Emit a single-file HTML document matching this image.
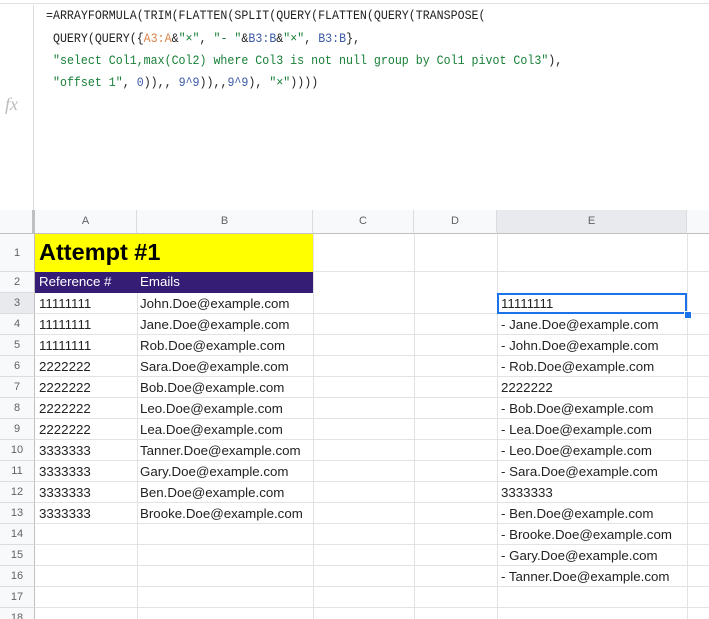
<!DOCTYPE html><html style="overflow:hidden;height:619px"><head><style>
body{margin:0;width:709px;height:619px;overflow:hidden;background:#fff;font-family:"Liberation Sans",Arial,sans-serif;position:relative}
.a{position:absolute}
.f{font-family:"Liberation Mono",monospace;font-size:12.5px;color:#222;white-space:pre;left:46px;transform:scaleX(0.93);transform-origin:0 0}
.g{color:#188038}.o{color:#d9834a}.b{color:#3c5aa8}
.h{position:absolute;top:210px;height:24px;background:#f8f9fa;border-bottom:1px solid #c0c0c0;border-right:1px solid #dadce0;box-sizing:border-box;font-size:11px;color:#5f6368;text-align:center;line-height:23px}
.r{position:absolute;left:0;width:35px;background:#f8f9fa;border-right:1px solid #c0c0c0;border-bottom:1px solid #dadce0;box-sizing:border-box;font-size:11px;color:#5f6368;text-align:center}
.vl{position:absolute;top:234px;height:385px;width:1px;background:#e2e3e3}
.hl{position:absolute;left:35px;right:0;height:1px;background:#e2e3e3}
.t{position:absolute;font-size:13.3px;color:#222;white-space:nowrap}
</style></head><body>
<div class="a" style="left:0;right:0;top:3px;height:1px;background:#e0e0e0"></div>
<div class="a" style="left:33px;top:5px;width:1px;height:205px;background:#dadce0"></div>
<div class="a" style="left:5px;top:94px;font-family:'Liberation Serif',serif;font-style:italic;font-size:18px;color:#bbb">fx</div>
<div class="a f" style="top:9px">=ARRAYFORMULA(TRIM(FLATTEN(SPLIT(QUERY(FLATTEN(QUERY(TRANSPOSE(</div>
<div class="a f" style="top:32px"> QUERY(QUERY({<span class="o">A3:A</span>&amp;<span class="g">"×"</span>, <span class="g">"- "</span>&amp;<span class="b">B3:B</span>&amp;<span class="g">"×"</span>, <span class="b">B3:B</span>},</div>
<div class="a f" style="top:54px"> <span class="g">"select Col1,max(Col2) where Col3 is not null group by Col1 pivot Col3"</span>),</div>
<div class="a f" style="top:76px"> <span class="g">"offset 1"</span>, <span class="b">0</span>)),, <span class="b">9^9</span>)),,<span class="b">9^9</span>), <span class="g">"×"</span>))))</div>
<div class="h" style="left:0;width:35px;border-right:3px solid #c0c0c0"></div>
<div class="h" style="left:35px;width:102px">A</div>
<div class="h" style="left:137px;width:176px">B</div>
<div class="h" style="left:313px;width:101px">C</div>
<div class="h" style="left:414px;width:83px">D</div>
<div class="h" style="left:497px;width:190px;background:#e8eaed">E</div>
<div class="h" style="left:687px;width:22px;border-right:0"></div>
<div class="vl" style="left:137px"></div><div class="vl" style="left:313px"></div><div class="vl" style="left:414px"></div><div class="vl" style="left:497px"></div><div class="vl" style="left:687px"></div>
<div class="hl" style="top:271px"></div>
<div id="rows"></div>
<div class="r" style="top:234px;height:38px;line-height:38px">1</div>
<div class="a" style="left:35px;top:234px;width:278px;height:38px;background:#ffff00"></div>
<div class="t" style="left:39px;top:239px;font-size:23.5px;font-weight:bold;color:#000">Attempt #1</div>
<div class="r" style="top:272px;height:21px;line-height:21px">2</div>
<div class="a" style="left:35px;top:272px;width:278px;height:21px;background:#351c75"></div>
<div class="t" style="left:39px;top:274px;color:#fff">Reference #</div>
<div class="t" style="left:140px;top:274px;color:#fff">Emails</div>
<script>
var A=["11111111","11111111","11111111","2222222","2222222","2222222","2222222","3333333","3333333","3333333","3333333"];
var B=["John","Jane","Rob","Sara","Bob","Leo","Lea","Tanner","Gary","Ben","Brooke"];
var E=["11111111","- Jane","- John","- Rob","2222222","- Bob","- Lea","- Leo","- Sara","3333333","- Ben","- Brooke","- Gary","- Tanner"];
var h="";
for(var i=0;i<16;i++){var y=293+i*21;var n=i+3;
h+='<div class="r" style="top:'+y+'px;height:21px;line-height:21px;'+(n==3?'background:#e8eaed':'')+'">'+n+'</div>';
h+='<div class="hl" style="top:'+(y+20)+'px"></div>';
if(i<11){h+='<div class="t" style="left:39px;top:'+(y+3)+'px">'+A[i]+'</div><div class="t" style="left:140px;top:'+(y+3)+'px">'+B[i]+'.Doe@example.com</div>';}
if(i<14){var e=E[i];if(e[0]=="-")e+=".Doe@example.com";h+='<div class="t" style="left:501px;top:'+(y+3)+'px">'+e+'</div>';}}
document.getElementById("rows").outerHTML=h;
</script>
<div class="a" style="left:497px;top:293px;width:190px;height:21px;border:2px solid #1a73e8;box-sizing:border-box"></div>
<div class="a" style="left:684px;top:311px;width:6px;height:6px;background:#1a73e8;border:1px solid #fff"></div>
</body></html>
